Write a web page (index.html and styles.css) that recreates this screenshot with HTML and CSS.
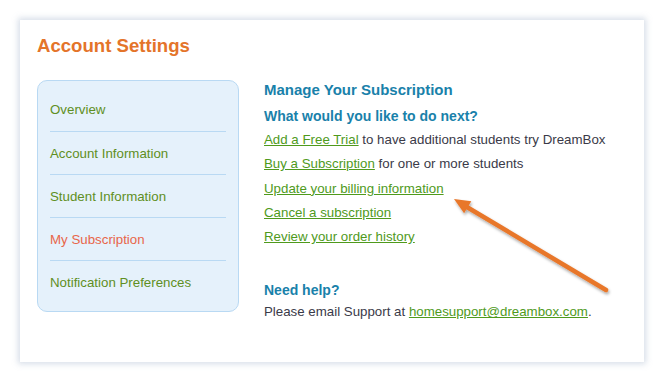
FILE: index.html
```html
<!DOCTYPE html>
<html lang="en">
  <head>
    <meta charset="UTF-8" />
    <title>Account Settings</title>
    <link rel="stylesheet" href="styles.css">
  </head>
  <body>
    <div class="card">
      <h1 class="title">Account Settings</h1>
      <div class="columns">
        <ul class="side-nav">
          <li class="nav-item"><a href="#">Overview</a></li>
          <li class="nav-item"><a href="#">Account Information</a></li>
          <li class="nav-item"><a href="#">Student Information</a></li>
          <li class="nav-item active"><a href="#">My Subscription</a></li>
          <li class="nav-item"><a href="#">Notification Preferences</a></li>
        </ul>
        <div class="content">
          <h2 class="heading">Manage Your Subscription</h2>
          <h3 class="subheading">What would you like to do next?</h3>
          <ul class="actions">
            <li><a href="#">Add a Free Trial</a> to have additional students try DreamBox</li>
            <li><a href="#">Buy a Subscription</a> for one or more students</li>
            <li><a href="#">Update your billing information</a></li>
            <li><a href="#">Cancel a subscription</a></li>
            <li><a href="#">Review your order history</a></li>
          </ul>
          <h3 class="subheading help">Need help?</h3>
          <p class="note">Please email Support at <a href="#">homesupport@dreambox.com</a>.</p>
        </div>
      </div>
      <!-- callout arrow pointing at the billing link -->
      <svg class="arrow" width="180" height="110" viewBox="0 0 180 110">
        <defs>
          <filter id="shade" x="-20%" y="-20%" width="140%" height="140%">
            <feDropShadow dx="1" dy="2" stdDeviation="1.5" flood-color="#000" flood-opacity="0.35" />
          </filter>
        </defs>
        <g filter="url(#shade)">
          <line x1="162" y1="98" x2="22" y2="14.5" stroke="#e8772a" stroke-width="4.5" stroke-linecap="round" />
          <polygon points="10,7 27.3,9.2 20.1,21.2" fill="#e8772a" />
        </g>
      </svg>
    </div>
  </body>
</html>
```

FILE: styles.css
```css
body {
  margin: 0;
  padding: 20px;
  background: #fff;
  font-family: "Liberation Sans", Arial, sans-serif;
  font-size: 13.3px;
  color: #3a3a48;
}
.card {
  position: relative;
  width: 624px;
  height: 342px;
  box-sizing: border-box;
  padding: 14px 17px;
  background: #fff;
  box-shadow: 0 0 6px 2px rgba(140, 160, 190, 0.35);
}
.title {
  margin: 0;
  font-size: 18.6px;
  font-weight: 700;
  color: #e4742a;
  line-height: 24px;
}
.columns {
  display: flex;
  gap: 25px;
  margin-top: 22px;
}
.side-nav {
  list-style: none;
  margin: 0;
  padding: 7px 12px 6px;
  width: 202px;
  height: 232px;
  box-sizing: border-box;
  background: #e5f1fb;
  border: 1px solid #b9d9f3;
  border-radius: 10px;
}
.nav-item {
  height: 43px;
  line-height: 43px;
  border-top: 1px solid #b9d9f3;
  box-sizing: border-box;
}
.nav-item:first-child {
  border-top: none;
}
.nav-item a {
  color: #5f8f23;
  text-decoration: none;
}
.nav-item.active a {
  color: #e8664a;
}
.heading {
  margin: 0;
  font-size: 15px;
  font-weight: 700;
  color: #1981aa;
  line-height: 19px;
}
.subheading {
  margin: 7px 0 0;
  font-size: 14px;
  font-weight: 700;
  color: #1981aa;
  line-height: 20px;
}
.actions {
  list-style: none;
  margin: 2px 0 0;
  padding: 0;
}
.actions li {
  line-height: 24.3px;
}
a {
  color: #4f9a1c;
}
.help {
  margin-top: 31px;
}
.note {
  margin: 2px 0 0;
  line-height: 20px;
}
.arrow {
  position: absolute;
  left: 424px;
  top: 172px;
}
```
